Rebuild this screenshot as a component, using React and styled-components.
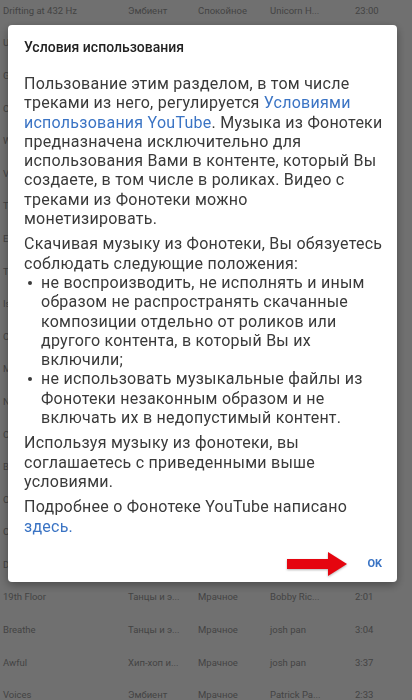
import React from 'react';
import styled, { createGlobalStyle } from 'styled-components';

const GlobalStyle = createGlobalStyle`
  html, body {
    margin: 0;
    padding: 0;
    background: #ffffff;
    font-family: Roboto, 'Noto Sans', 'Liberation Sans', sans-serif;
  }
`;

const Page = styled.div`
  width: 412px;
  height: 700px;
  overflow: hidden;
  background: #fff;
`;

const Table = styled.div`
  margin-top: -6px;
`;

const Row = styled.div`
  display: grid;
  grid-template-columns: 125px 70px 72px 85px auto;
  align-items: center;
  height: 32.6px;
  padding-left: 3px;
  font-size: 9.5px;
  color: #9a9a9a;
  white-space: nowrap;
`;

const Overlay = styled.div`
  position: fixed;
  inset: 0;
  background: rgba(0, 0, 0, 0.56);
`;

const Dialog = styled.div`
  margin: 25px 0 0 8px;
  width: 389px;
  box-sizing: border-box;
  background: #fff;
  border-radius: 4px;
  box-shadow: 0 3px 10px rgba(0, 0, 0, 0.35);
  padding: 12px 0 0 16px;
`;

const Title = styled.h2`
  margin: 0 0 17px;
  font-size: 14px;
  line-height: 20px;
  font-weight: 500;
  color: #222;
`;

const Body = styled.div`
  font-size: 16px;
  line-height: 19.3px;
  letter-spacing: 0.25px;
  color: #3a3a3a;
  white-space: nowrap;
`;

const Para = styled.p`
  margin: 0 0 ${(p) => (p.$last ? 0 : 6)}px;
`;

const Link = styled.a`
  color: #3b74c4;
  text-decoration: none;
`;

const List = styled.ul`
  margin: 0 0 6px;
  padding: 0;
  list-style: none;
`;

const Item = styled.li`
  position: relative;
  padding-left: 17px;
  &::before {
    content: '';
    position: absolute;
    left: 4px;
    top: 8px;
    width: 4px;
    height: 4px;
    border-radius: 50%;
    background: #3a3a3a;
  }
`;

const Footer = styled.div`
  display: flex;
  justify-content: flex-end;
  align-items: center;
  gap: 19px;
  height: 36px;
  margin-top: 10px;
  padding-right: 15px;
`;

const OkButton = styled.button`
  border: none;
  background: none;
  padding: 0;
  font-family: inherit;
  font-size: 11px;
  font-weight: 700;
  color: #3b74c4;
  cursor: pointer;
`;

const Arrow = () => (
  <svg width="62" height="26" viewBox="0 0 62 26" style={{ filter: 'drop-shadow(0 1px 1px rgba(0,0,0,0.3))' }}>
    <rect x="1" y="8" width="43" height="10" fill="#e5050f" />
    <polygon points="42,1 61,13 42,25" fill="#e5050f" />
  </svg>
);

// only the first and last rows peek out from behind the dialog
const rows = [
  ['Drifting at 432 Hz', 'Эмбиент', 'Спокойное', 'Unicorn H...', '23:00'],
  ['Uplifting Day'],
  ['Gold Coast'],
  ['Cold Night'],
  ['Wandering'],
  ['Vibe'],
  ['Tides'],
  ['Evening'],
  ['Tropic'],
  ['Island'],
  ['Cruise'],
  ['Midnight'],
  ['Nostalgia'],
  ['Calm'],
  ['Blue'],
  ['Ocean'],
  ['Chill'],
  ['Dreams'],
  ['19th Floor', 'Танцы и э...', 'Мрачное', 'Bobby Ric...', '2:01'],
  ['Breathe', 'Танцы и э...', 'Мрачное', 'josh pan', '3:04'],
  ['Awful', 'Хип-хоп и...', 'Мрачное', 'josh pan', '3:37'],
  ['Voices', 'Эмбиент', 'Мрачное', 'Patrick Pa...', '2:33'],
];

export default function App() {
  return (
    <Page>
      <GlobalStyle />
      <Table>
        {rows.map((r, i) => (
          <Row key={i}>
            {r.map((c, j) => (
              <span key={j}>{c}</span>
            ))}
          </Row>
        ))}
      </Table>
      <Overlay>
        <Dialog>
          <Title>Условия использования</Title>
          <Body>
            <Para>
              Пользование этим разделом, в том числе<br />
              треками из него, регулируется <Link href="#">Условиями<br />
              использования YouTube</Link>. Музыка из Фонотеки<br />
              предназначена исключительно для<br />
              использования Вами в контенте, который Вы<br />
              создаете, в том числе в роликах. Видео с<br />
              треками из Фонотеки можно<br />
              монетизировать.
            </Para>
            <Para $last>
              Скачивая музыку из Фонотеки, Вы обязуетесь<br />
              соблюдать следующие положения:
            </Para>
            <List>
              <Item>
                не воспроизводить, не исполнять и иным<br />
                образом не распространять скачанные<br />
                композиции отдельно от роликов или<br />
                другого контента, в который Вы их<br />
                включили;
              </Item>
              <Item>
                не использовать музыкальные файлы из<br />
                Фонотеки незаконным образом и не<br />
                включать их в недопустимый контент.
              </Item>
            </List>
            <Para>
              Используя музыку из фонотеки, вы<br />
              соглашаетесь с приведенными выше<br />
              условиями.
            </Para>
            <Para $last>
              Подробнее о Фонотеке YouTube написано<br />
              <Link href="#">здесь.</Link>
            </Para>
          </Body>
          <Footer>
            <Arrow />
            <OkButton>OK</OkButton>
          </Footer>
        </Dialog>
      </Overlay>
    </Page>
  );
}
